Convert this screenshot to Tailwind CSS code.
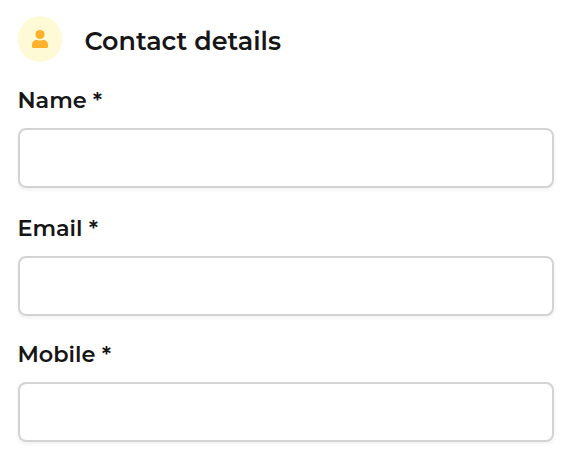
<!DOCTYPE html>
<html lang="en">
<head>
    <meta charset="UTF-8">
    <title>Contact details</title>
    <script src="https://cdn.jsdelivr.net/npm/@tailwindcss/browser@4"></script>
</head>
<body class="bg-white text-[#161616] font-[Montserrat,Inter,sans-serif] overflow-hidden">
<main class="pl-[18px] pr-[30px] pt-4 pb-6">
    <!-- Section heading -->
    <header class="flex items-center gap-[22px] h-[46px]">
        <div class="w-[44.4px] h-[46px] rounded-full bg-[#fffad6] flex items-center justify-center">
            <svg class="w-4 h-[18px]" viewBox="0 0 16 18" fill="#fdb22b">
                <circle cx="8" cy="4.5" r="4.6"/>
                <path d="M4.5 10c1.2 0 2 .6 3.5.6s2.3-.6 3.5-.6C14 10 16 12 16 14.5v2a1.5 1.5 0 0 1-1.5 1.5h-13A1.5 1.5 0 0 1 0 16.5v-2C0 12 2 10 4.5 10z"/>
            </svg>
        </div>
        <h1 class="text-[25.4px] leading-[46px] font-semibold pt-1">Contact details</h1>
    </header>
    <!-- Form fields -->
    <form>
        <label for="name" class="block -ml-[0.6px] mt-[22px] h-8 leading-8 text-[22.4px] font-semibold">Name *</label>
        <input id="name" type="text" class="block mt-3 w-full h-[60px] border-2 border-[#d3d3d3] rounded-lg shadow-[0_2px_4px_rgba(0,0,0,0.06)]">
        <label for="email" class="block -ml-[0.6px] mt-6 h-8 leading-8 text-[22.4px] font-semibold">Email *</label>
        <input id="email" type="email" class="block mt-3 w-full h-[60px] border-2 border-[#d3d3d3] rounded-lg shadow-[0_2px_4px_rgba(0,0,0,0.06)]">
        <label for="mobile" class="block -ml-[0.6px] mt-[22px] h-8 leading-8 text-[22.4px] font-semibold">Mobile *</label>
        <input id="mobile" type="tel" class="block mt-3 w-full h-[60px] border-2 border-[#d3d3d3] rounded-lg shadow-[0_2px_4px_rgba(0,0,0,0.06)]">
    </form>
</main>
</body>
</html>
